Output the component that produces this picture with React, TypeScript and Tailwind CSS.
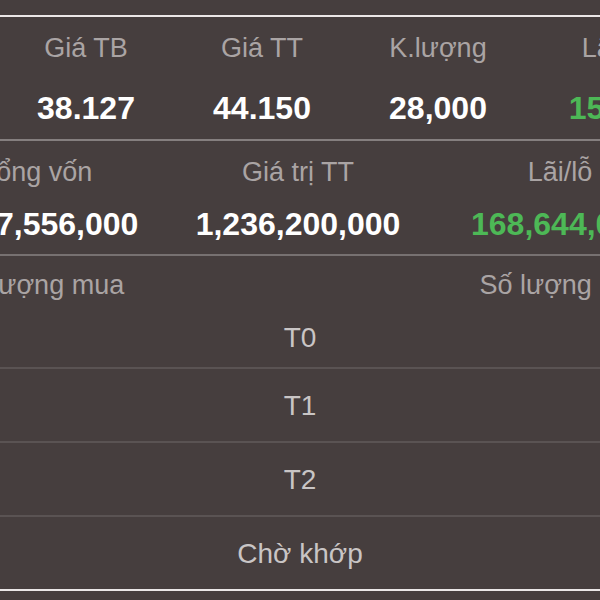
import React from "react";

const font = { fontFamily: '"Liberation Sans", Arial, sans-serif' };

export default function App() {
  const row1 = [
    { l: "Giá TB", v: "38.127", g: false },
    { l: "Giá TT", v: "44.150", g: false },
    { l: "K.lượng", v: "28,000", g: false },
    { l: "Lãi/lỗ", v: "15.8%", g: true },
  ];
  const row2 = [
    { l: "Tổng vốn", v: "1,067,556,000", g: false },
    { l: "Giá trị TT", v: "1,236,200,000", g: false },
    { l: "Lãi/lỗ", v: "168,644,000", g: true },
  ];
  const rows = ["T1", "T2", "Chờ khớp"];
  return (
    <div
      className="w-[600px] h-[600px] overflow-hidden bg-[#463e3e] flex flex-col"
      style={font}
    >
      <div className="h-[15px] shrink-0" />
      <div className="h-[2px] shrink-0 bg-[#ebe7e7]" />

      {/* Row 1 */}
      <div className="h-[122px] shrink-0 pt-[18px] flex flex-col">
        <div className="flex ml-[-2px]">
          {row1.map((c) => (
            <div
              key={c.l}
              className="w-[176px] shrink-0 text-center text-[27px] leading-[27px] text-[#aaa4a4] whitespace-nowrap"
            >
              {c.l}
            </div>
          ))}
        </div>
        <div className="flex ml-[-2px] mt-[30px]">
          {row1.map((c) => (
            <div
              key={c.l}
              className={`w-[176px] shrink-0 text-center text-[32px] leading-[32px] font-bold whitespace-nowrap ${
                c.g ? "text-[#4db856]" : "text-white"
              }`}
            >
              {c.v}
            </div>
          ))}
        </div>
      </div>
      <div className="h-[2px] shrink-0 bg-[#857f7f]" />

      {/* Row 2 */}
      <div className="h-[113px] shrink-0 pt-[18px] flex flex-col">
        <div className="flex ml-[-95px]">
          {row2.map((c) => (
            <div
              key={c.l + c.v}
              className="w-[262px] shrink-0 text-center text-[27px] leading-[27px] text-[#aaa4a4] whitespace-nowrap"
            >
              {c.l}
            </div>
          ))}
        </div>
        <div className="flex ml-[-95px] mt-[22px]">
          {row2.map((c) => (
            <div
              key={c.v}
              className={`w-[262px] shrink-0 text-center text-[32px] leading-[32px] font-bold whitespace-nowrap ${
                c.g ? "text-[#4db856]" : "text-white"
              }`}
            >
              {c.v}
            </div>
          ))}
        </div>
      </div>
      <div className="h-[2px] shrink-0 bg-[#777171]" />

      {/* Header + T0 */}
      <div className="h-[111px] shrink-0 pt-[16px] flex flex-col">
        <div className="flex ml-[-93px] text-[27px] leading-[27px] text-[#aaa4a4] whitespace-nowrap">
          <div className="w-[262px] shrink-0 text-center">Số lượng mua</div>
          <div className="w-[262px] shrink-0" />
          <div className="w-[262px] shrink-0 text-center">Số lượng bán</div>
        </div>
        <div className="mt-[25px] text-center text-[28px] leading-[28px] text-[#c9c5c5]">
          T0
        </div>
      </div>

      {rows.map((r) => (
        <React.Fragment key={r}>
          <div className="h-[2px] shrink-0 bg-[#5a5353]" />
          <div className="h-[72px] shrink-0 pt-[23px] text-center text-[28px] leading-[28px] text-[#c9c5c5]">
            {r}
          </div>
        </React.Fragment>
      ))}
      <div className="h-[2px] shrink-0 bg-[#ebe7e7]" />
    </div>
  );
}
